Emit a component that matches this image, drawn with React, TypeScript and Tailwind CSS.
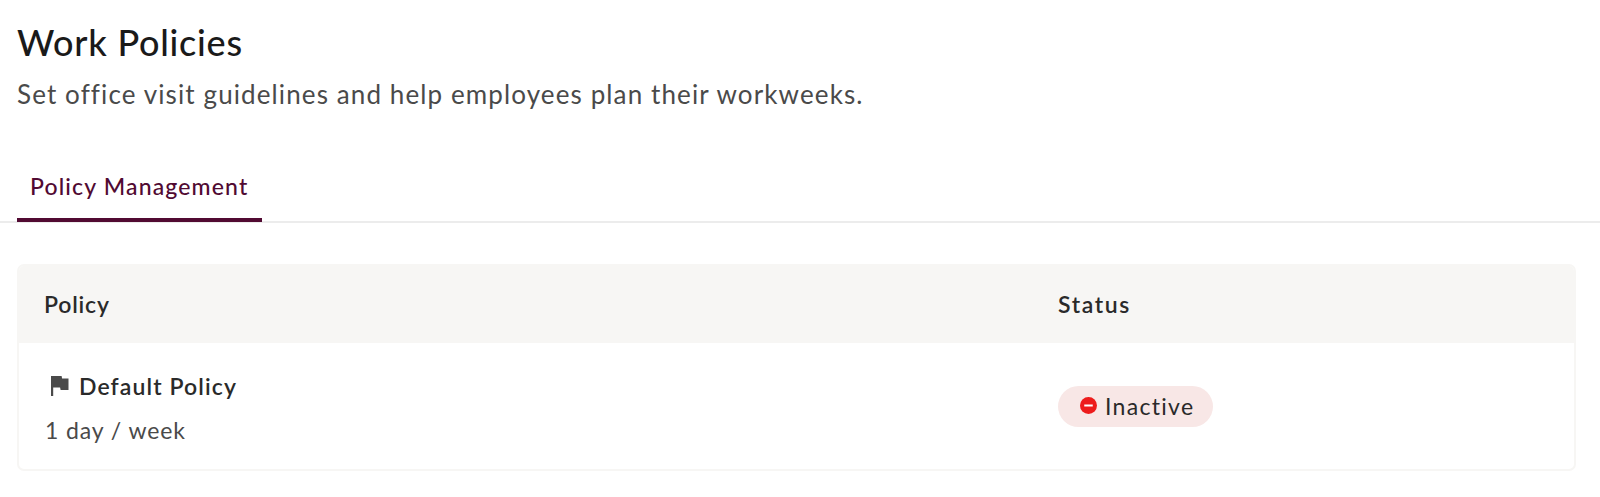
import type { ReactNode } from "react";

interface Policy {
  name: string;
  schedule: string;
  status: string;
}

const policies: Policy[] = [{ name: "Default Policy", schedule: "1 day / week", status: "Inactive" }];

function FlagIcon() {
  return (
    <svg width="18" height="20" viewBox="0 0 18 20" fill="#4a4a4a" aria-hidden="true">
      <path d="M0 0h10.6l.5 2.4h6.4v11.6H9.6L9.1 11.6H2.2V20H0z" />
    </svg>
  );
}

function InactiveIcon() {
  return (
    <svg width="17" height="17" viewBox="0 0 17 17" className="-mt-0.5" aria-hidden="true">
      <circle cx="8.5" cy="8.5" r="8.5" fill="#ed1c1c" />
      <rect x="4.25" y="7.5" width="8.5" height="2" fill="#ffffff" />
    </svg>
  );
}

function StatusBadge({ children }: { children: ReactNode }) {
  return (
    <span className="mt-px inline-flex h-[41px] w-[155px] items-center rounded-full bg-[#f8e7e6] pl-[22px] text-[#2a2a2a]">
      <InactiveIcon />
      <span className="-mt-0.5 ml-2 text-[23px] leading-8 tracking-[1.3px]">{children}</span>
    </span>
  );
}

export default function App() {
  return (
    <div className="min-h-[497px] bg-white font-['Lato',sans-serif] text-[#2a2a2a]">
      <header className="pl-[17px] pt-[18px]">
        <h1 className="text-[36px] font-medium leading-12 tracking-[0.75px] text-[#1a1a1a]">Work Policies</h1>
        <p className="mt-2.5 text-[26px] leading-9 tracking-[1.11px] text-[#4a4a4a]">
          Set office visit guidelines and help employees plan their workweeks.
        </p>
      </header>

      <nav className="mt-11 flex h-[67px] border-b-2 border-[#ececec] pl-[17px]">
        <button className="-mb-px flex h-[66px] w-[245px] border-b-4 border-[#510a32] pl-[13px] pt-3.5 text-[23px] font-medium leading-8 tracking-[1.15px] text-[#510a32]">
          Policy Management
        </button>
      </nav>

      <section className="ml-[17px] mt-[41px] w-[1559px] overflow-hidden rounded-[7px] border-2 border-[#f7f6f4]">
        <div className="flex h-[77px] items-center bg-[#f7f6f4] text-[23px] font-semibold">
          <div className="w-[1039px] pl-[25px] tracking-[0.8px]">Policy</div>
          <div className="tracking-[1.6px]">Status</div>
        </div>
        {policies.map((policy) => (
          <div key={policy.name} className="flex h-[126px] items-center">
            <div className="w-[1039px] pl-[26px] pt-1">
              <div className="flex items-center pl-1.5">
                <FlagIcon />
                <span className="ml-2.5 text-[23px] font-semibold leading-8 tracking-[1.1px]">{policy.name}</span>
              </div>
              <div className="mt-3 text-[23px] leading-8 tracking-[0.9px] text-[#4a4a4a]">{policy.schedule}</div>
            </div>
            <StatusBadge>{policy.status}</StatusBadge>
          </div>
        ))}
      </section>
    </div>
  );
}
